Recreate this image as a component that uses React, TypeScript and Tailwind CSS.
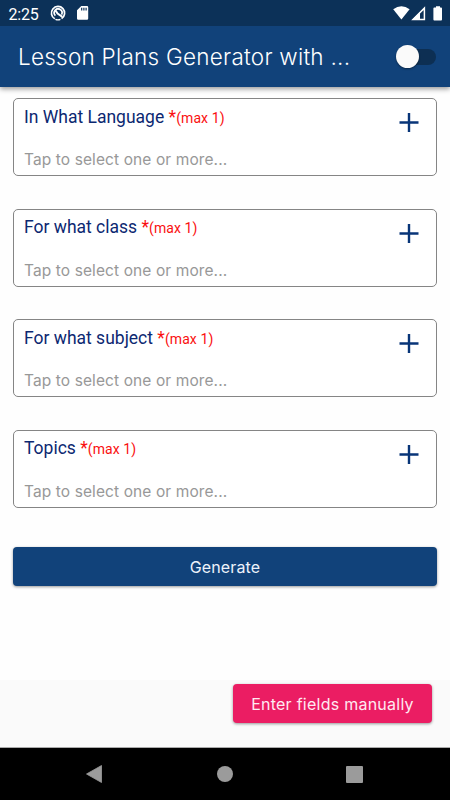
type FieldProps = { label: string };

const fields = ['In What Language', 'For what class', 'For what subject', 'Topics'];

function StatusBar() {
  return (
    <div className="flex h-[26px] items-center bg-[#0c3158] text-white">
      <span className="ml-[8.5px] mt-[3px] w-[41.5px] font-['Roboto',sans-serif] text-[16px] leading-[26px] tracking-[-0.2px]">2:25</span>
      <svg className="size-[16px]" viewBox="0 0 16 16" fill="none" stroke="white">
        <path d="M4.8 13.8A6.6 6.6 0 1 1 11.6 13.6" strokeWidth="1.7" />
        <path d="M5.4 14.4Q8 15.4 10.4 14.4" strokeWidth="1.2" />
        <path d="M5.4 10.6A3.9 3.9 0 1 1 11.6 9.6" strokeWidth="1.7" />
        <path d="M5.6 5.6 7.6 8.6 12.4 11.8" strokeWidth="2" />
      </svg>
      <svg className="ml-[10.5px] h-[14px] w-[12px]" viewBox="0 0 12 14">
        <path fill="white" d="M4.3 0H10q1.2 0 1.2 1.2v11.4q0 1.2-1.2 1.2H1.3Q0 13.8 0 12.6V4.2z" />
        <path stroke="#0c3158" strokeWidth="1.2" d="M4.7 1.8v2.6M6.9 1.8v2.6M9.1 1.8v2.6" />
      </svg>
      <div className="ml-auto mr-[7px] flex items-center">
        <svg className="h-[14px] w-[17px]" viewBox="0 0 17 14">
          <path fill="white" d="M.2 3.2Q8.5-2.8 16.6 3.2L8.4 13.4z" />
        </svg>
        <svg className="ml-px h-[15px] w-[15px]" viewBox="0 0 15 15">
          <path fill="none" stroke="white" strokeWidth="1.5" d="M2 13.5H13.4V2.1z" />
          <path fill="white" d="M1.2 13.8 9 6v7.8z" />
        </svg>
        <svg className="ml-[7px] h-[15px] w-[10px]" viewBox="0 0 10 15">
          <path fill="white" d="M3 .2h4v1.4h1.1q.9 0 .9.9v11q0 .9-.9.9H1.3q-.9 0-.9-.9v-11q0-.9.9-.9H3z" />
        </svg>
      </div>
    </div>
  );
}

function Field({ label }: FieldProps) {
  return (
    <div className="mb-[32.6px] flex h-[78px] justify-between rounded-[5px] border border-[#858585] bg-white pl-[10px] pr-[17px]">
      <div>
        <div className="mt-[6.4px] h-[23px] whitespace-nowrap font-['Roboto',sans-serif] text-[17.5px] leading-[23px] text-[#0c2871]">
          {label} <span className="text-[#fa1010]">*</span>
          <span className="text-[14px] tracking-[0.1px] text-[#fa1010]">(max 1)</span>
        </div>
        <div className="mt-[20.6px] whitespace-nowrap font-['Inter',sans-serif] text-[15.5px] leading-[22px] tracking-[0.1px] text-[#989898]">
          Tap to select one or more...
        </div>
      </div>
      <svg className="mt-[14px] size-[20px]" viewBox="0 0 20 20">
        <path d="M10 0v19M.5 9.5h19" stroke="#083578" strokeWidth="2.4" />
      </svg>
    </div>
  );
}

export default function App() {
  return (
    <div className="flex h-[800px] w-[450px] flex-col overflow-hidden bg-[#fafafa] font-['Inter',sans-serif]">
      <header className="relative z-10 h-[87px] shrink-0 bg-[#11427a] shadow-[0_2px_5px_rgba(0,0,0,0.4)]">
        <StatusBar />
        <div className="flex h-[61px] items-center justify-between pl-[18px] pr-[14px]">
          <h1 className="whitespace-nowrap text-[22.5px] font-light leading-[30px] tracking-[0.25px] text-white">
            Lesson Plans Generator with ...
          </h1>
          <div className="flex h-[16px] w-[40px] items-center rounded-full bg-[#0d2f53]">
            <span className="size-[23px] shrink-0 rounded-full bg-[#fafafa] shadow-[0_1px_2px_rgba(0,0,0,0.4)]" />
          </div>
        </div>
      </header>
      <main className="h-[593px] shrink-0 bg-[#fefefe] px-[13px] pt-[11.2px]">
        {fields.map((label) => (
          <Field key={label} label={label} />
        ))}
        <button className="mt-[39px] block h-[39px] w-full rounded-[4px] bg-[#11427a] pt-px text-[16px] leading-[39px] tracking-[0.15px] text-[#edf2fb] shadow-[0_1px_3px_rgba(0,0,0,0.4)]">
          Generate
        </button>
      </main>
      <div className="flex h-[68px] shrink-0 justify-end border-b border-[#aaa] pr-[18px] pt-[4px]">
        <button className="h-[39px] w-[199px] whitespace-nowrap rounded-[4px] bg-[#eb1d63] pt-px text-[16px] leading-[39px] tracking-[0.25px] text-[#ffeaf1] shadow-[0_1px_3px_rgba(0,0,0,0.4)]">
          Enter fields manually
        </button>
      </div>
      <nav className="flex h-[52px] shrink-0 items-center justify-between bg-black pl-[86px] pr-[87px]">
        <svg className="size-[18px]" viewBox="0 0 18 18">
          <path d="M.5 9 15.5.5v17z" fill="#9b9b9b" stroke="#9b9b9b" strokeWidth=".8" strokeLinejoin="round" />
        </svg>
        <span className="size-[16px] rounded-full bg-[#9b9b9b]" />
        <span className="size-[17px] rounded-[1px] bg-[#9b9b9b]" />
      </nav>
    </div>
  );
}
